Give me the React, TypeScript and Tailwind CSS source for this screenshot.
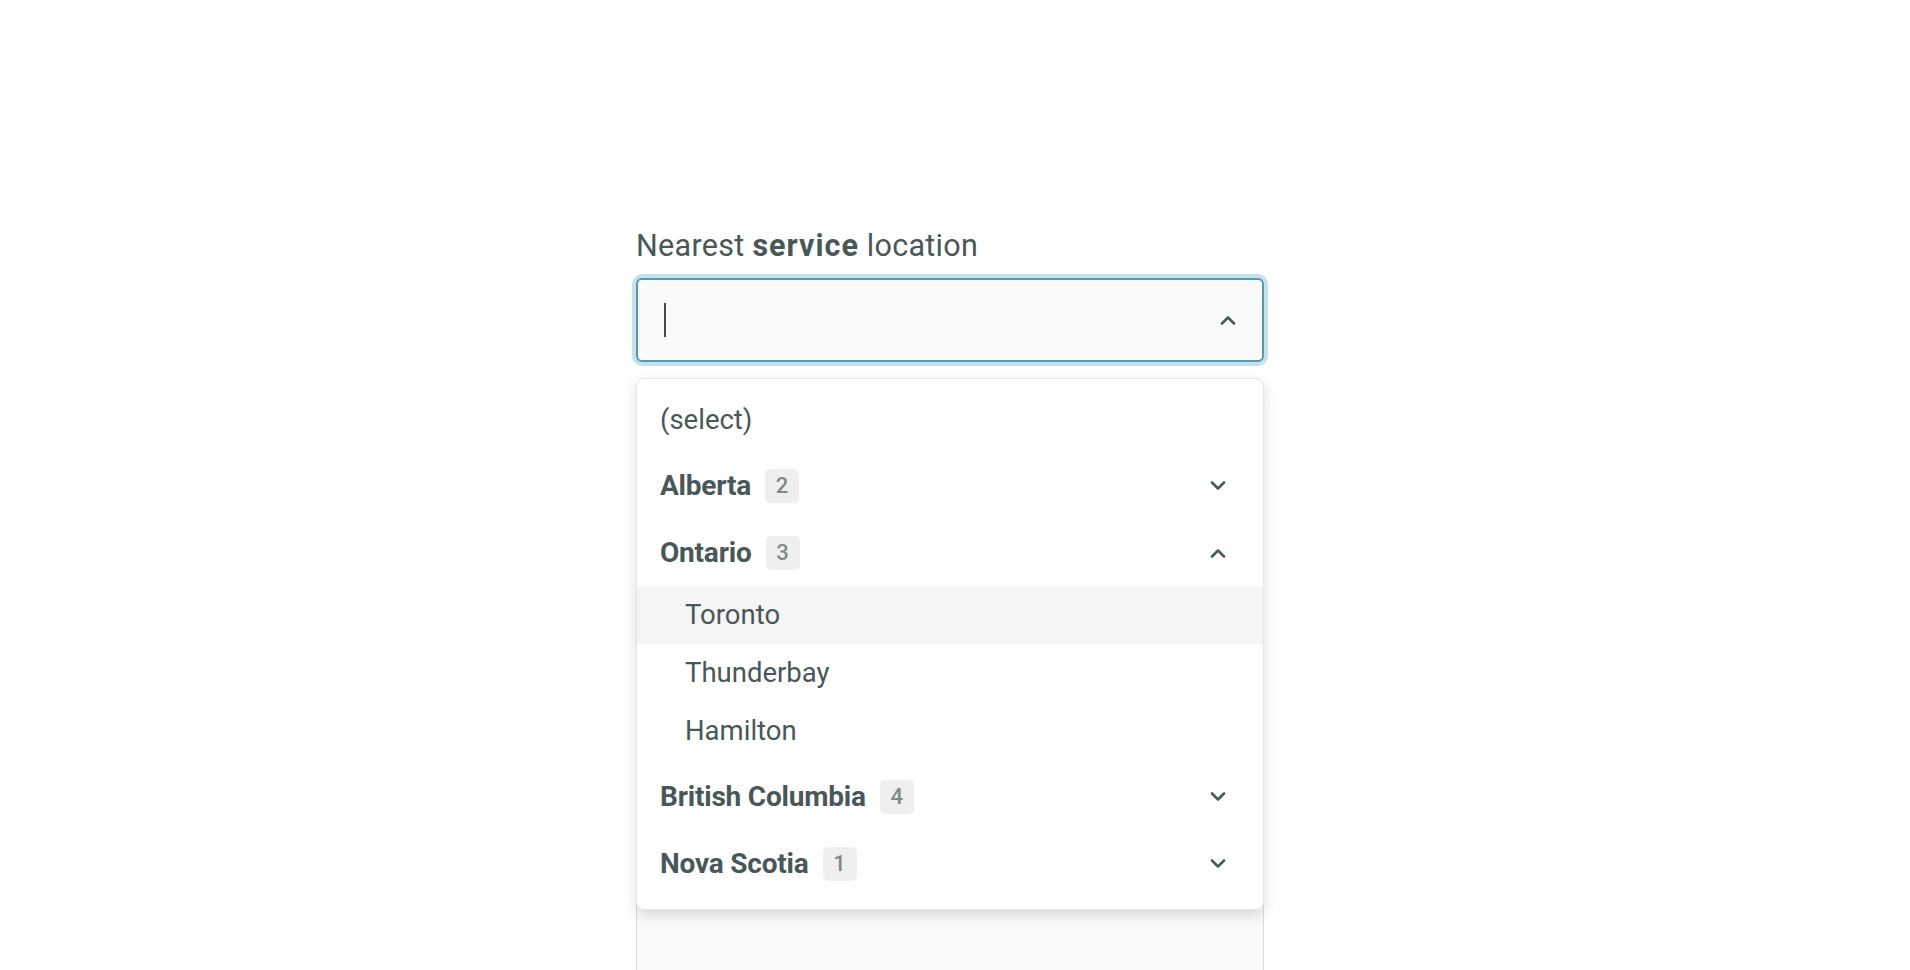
import React from 'react'

type Region = {
  name: string;
  count: number;
  open?: boolean;
  cities?: string[];
};

const regions: Region[] = [
  { name: 'Alberta', count: 2 },
  { name: 'Ontario', count: 3, open: true, cities: ['Toronto', 'Thunderbay', 'Hamilton'] },
  { name: 'British Columbia', count: 4 },
  { name: 'Nova Scotia', count: 1 },
]

function Chevron({ up = false }: { up?: boolean }) {
  return (
    <svg width="16" height="10" viewBox="0 0 16 10" fill="none" className="shrink-0">
      <path
        d={up ? 'M2 8.5 8 2.5l6 6' : 'M2 1.5l6 6 6-6'}
        stroke="#4a5a5a"
        strokeWidth="2.6"
        strokeLinecap="round"
        strokeLinejoin="round"
      />
    </svg>
  )
}

export default function App() {
  return (
    <div className="min-h-screen w-full bg-white font-['Roboto','Liberation_Sans',sans-serif] text-[#485858]">
      <div className="ml-[636px] w-[628px] pt-[228px]">
        <label className="block text-[30.5px] leading-[36px] tracking-[0.3px]">
          Nearest <span className="font-bold tracking-[1px]">service</span> location
        </label>

        <div className="relative mt-[14px]">
          {/* select input, focused */}
          <div className="flex h-[84px] items-center justify-between rounded-[6px] border-2 border-[#4f9ab4] bg-[#fafafa] pl-[26px] pr-[26px] shadow-[0_0_0_4px_#c6e1e8]">
            <span className="h-[34px] w-[1.5px] bg-[#3f4d4d]" />
            <Chevron up />
          </div>

          {/* next field, partly under the menu */}
          <div className="mt-[40px] h-[600px] border border-[#dcdcdc] bg-[#fafafa]" />

          {/* menu */}
          <div className="absolute left-0 right-0 top-[100px] rounded-[8px] border border-[#e6e6e6] bg-white pb-[12px] pt-[8px] shadow-[0_5px_14px_rgba(0,0,0,0.14)]">
            <div className="flex h-[65px] items-center pl-[23px] text-[27.5px]">(select)</div>
            {regions.map((r) => (
              <div key={r.name}>
                <div className="flex h-[67px] items-center justify-between pl-[23px] pr-[37px]">
                  <div className="flex items-center gap-[14px]">
                    <span className="text-[28px] font-bold tracking-[-0.2px]">{r.name}</span>
                    <span className="flex h-[34px] min-w-[34px] items-center justify-center rounded-[5px] bg-[#efefef] px-[8px] text-[22px] font-medium text-[#7f8a8a]">
                      {r.count}
                    </span>
                  </div>
                  <Chevron up={r.open} />
                </div>
                {r.open && (
                  <div className="pb-[3px]">
                    {r.cities?.map((c, i) => (
                      <div
                        key={c}
                        className={`flex h-[58px] items-center pl-[48px] text-[27.5px] ${i === 0 ? 'bg-[#f5f5f5]' : ''}`}
                      >
                        {c}
                      </div>
                    ))}
                  </div>
                )}
              </div>
            ))}
          </div>
        </div>
      </div>
    </div>
  )
}
